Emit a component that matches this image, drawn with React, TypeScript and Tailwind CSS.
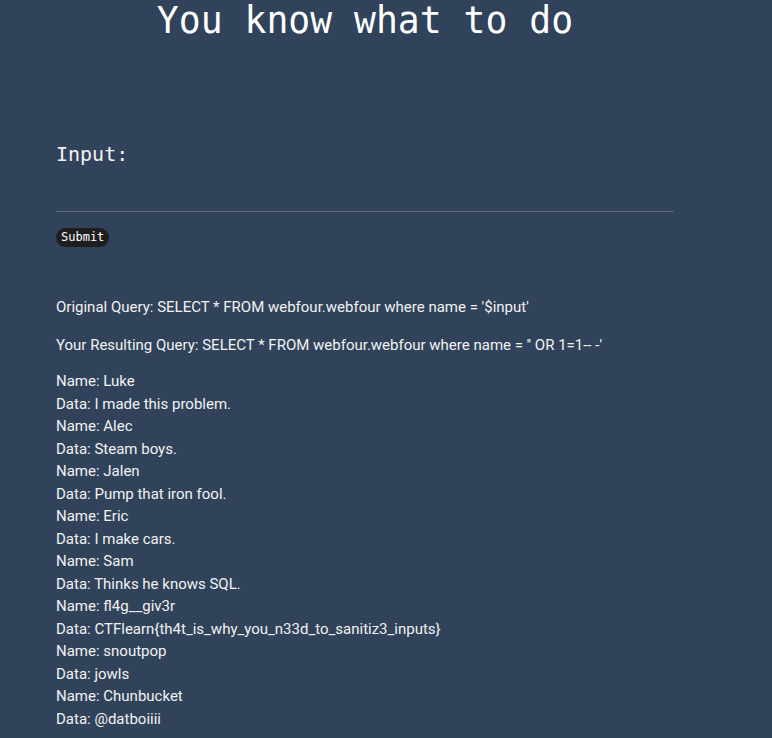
const rows: [string, string][] = [
  ["Luke", "I made this problem."],
  ["Alec", "Steam boys."],
  ["Jalen", "Pump that iron fool."],
  ["Eric", "I make cars."],
  ["Sam", "Thinks he knows SQL."],
  ["fl4g__giv3r", "CTFlearn{th4t_is_why_you_n33d_to_sanitiz3_inputs}"],
  ["snoutpop", "jowls"],
  ["Chunbucket", "@datboiiii"],
]

export default function App() {
  return (
    <div className="min-h-[738px] bg-[#30435a] text-[#f2f2f2]">
      <div className="ml-[56px] w-[618px]">
        <h1 className="text-center font-['DejaVu_Sans_Mono',monospace] text-[36.4px] leading-[42px] text-white">
          You know what to do
        </h1>

        <form className="mt-[100px]" onSubmit={(e) => e.preventDefault()}>
          <label className="block font-['DejaVu_Sans_Mono',monospace] text-[20px] leading-[24px]">
            Input:
          </label>
          <input
            className="mt-[10px] block h-[36px] w-full border-b border-[#5d6876] bg-transparent outline-none"
            type="text"
          />
          <button
            className="mt-[16px] rounded-full bg-[#1e1e1e] px-[5px] py-[2px] font-['DejaVu_Sans_Mono',monospace] text-[12px] leading-[15px] text-white"
            type="submit"
          >
            Submit
          </button>
        </form>

        <div className="mt-[49px] font-['Roboto',sans-serif] text-[15px] leading-[22.5px]">
          <p>Original Query: SELECT * FROM webfour.webfour where name = '$input'</p>
          <p className="mt-[15px]">
            Your Resulting Query: SELECT * FROM webfour.webfour where name = '' OR 1=1-- -'
          </p>
          <p className="mt-[14px]">
            {rows.map(([name, data]) => (
              <span key={name}>
                Name: {name}
                <br />
                Data: {data}
                <br />
              </span>
            ))}
          </p>
        </div>
      </div>
    </div>
  )
}
